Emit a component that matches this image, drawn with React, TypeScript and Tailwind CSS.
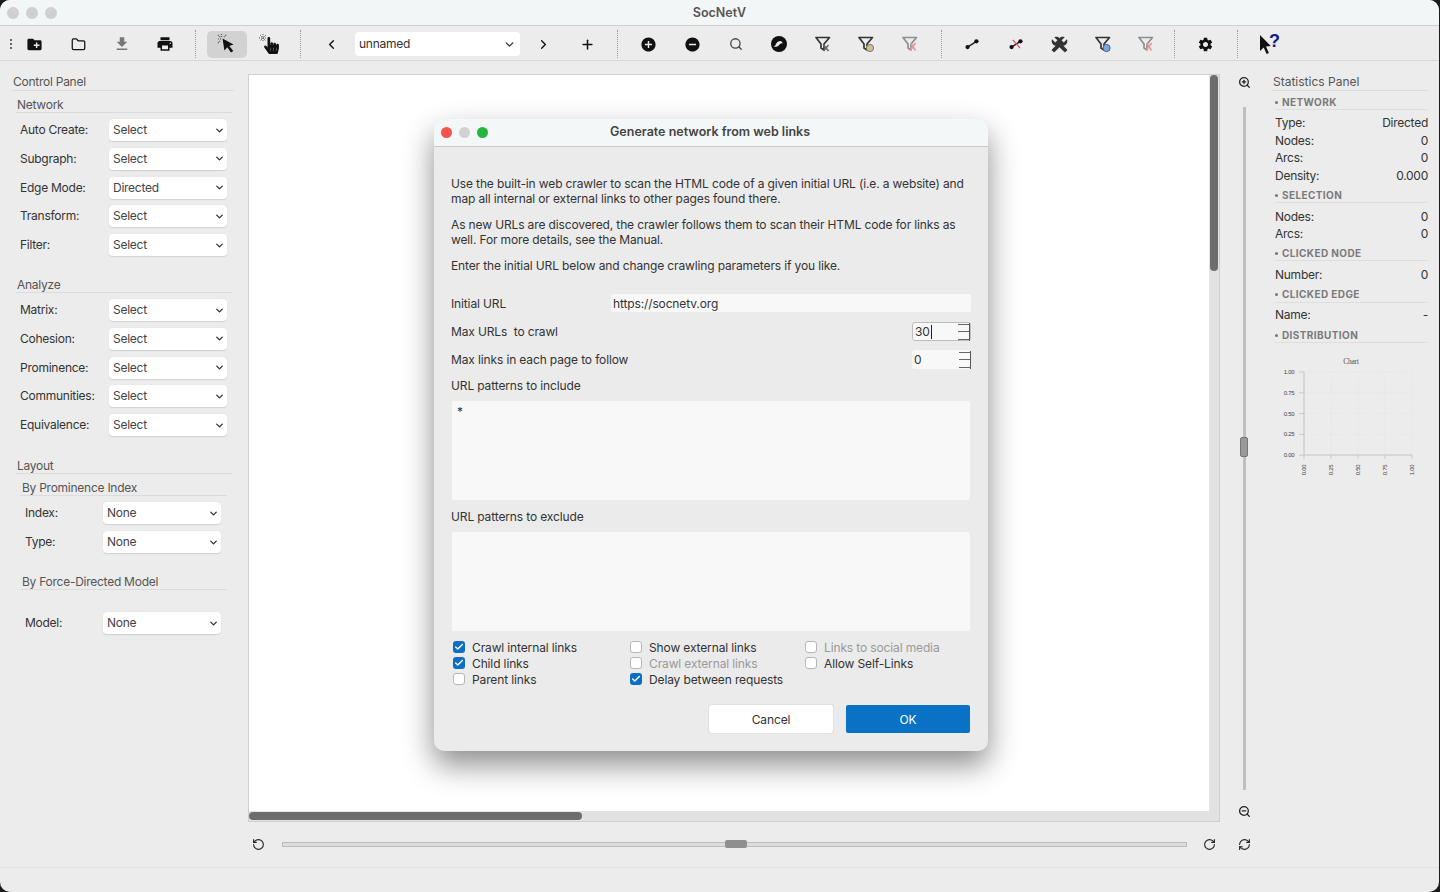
import React from 'react';
import { ChevronDown, ChevronLeft, ChevronRight, Plus, Check, ZoomIn, ZoomOut, RotateCcw, RotateCw, RefreshCw, Folder, Search } from 'lucide-react';
import { MdCreateNewFolder, MdFileDownload, MdPrint, MdAddCircle, MdRemoveCircle, MdSettings, MdBuild } from 'react-icons/md';
import { FaHandPointer } from 'react-icons/fa';

const FONT = "font-['Inter','Liberation_Sans',sans-serif]";

function Sep() {
  return <div className="h-[28px] w-px border-l border-dotted border-[#9a9a9a]" />;
}

function Tool({ children, className = '' }: { children?: React.ReactNode; className?: string }) {
  return <div className={`flex h-[28px] w-[43.5px] shrink-0 items-center justify-center text-[#111] ${className}`}>{children}</div>;
}

function Funnel({ badge, faded }: { badge: string; faded?: boolean }) {
  return (
    <svg width="20" height="20" viewBox="0 0 20 20" className={faded ? 'opacity-50' : ''}>
      <path d="M3 3.500h13.500L11 10v6l-3-2v-4z" fill="none" stroke="#333" strokeWidth="1.7" strokeLinejoin="round" />
      {badge === 'x' && <path d="M10.500 11l5 6M15.500 11l-5 6" stroke="#666" strokeWidth="1.5" />}
      {badge === 'gold' && <circle cx="14" cy="14" r="3.600" fill="#c9c48a" stroke="#777" />}
      {badge === 'red' && <path d="M10.500 16l5-7M11 9.500l4.500 7" stroke="#e0485a" strokeWidth="1.7" />}
      {badge === 'blue' && <circle cx="13.500" cy="14" r="3.600" fill="#7fa6d8" stroke="#3d5f8f" />}
    </svg>
  );
}

function Edge({ red }: { red?: boolean }) {
  return (
    <svg width="16" height="16" viewBox="0 0 18 18">
      <path d="M4 12.500L14 6" stroke="#222" strokeWidth="1.600" />
      <circle cx="4" cy="12.500" r="2.400" fill="#111" />
      <circle cx="14" cy="6" r="2.400" fill="#111" />
      {red && <path d="M5.500 4.500l8 9" stroke="#e8506a" strokeWidth="1.300" />}
    </svg>
  );
}

function ArrowSpark() {
  return (
    <svg width="22" height="22" viewBox="0 0 22 22">
      <path d="M6.500 5.500l11 6-4.200 1.400 4 5-2.300 1.600-3.700-5.200-2.900 3.100z" fill="#111" />
      <g stroke="#555" strokeWidth="1.200" strokeDasharray="1 1">
        <path d="M2 6h3.500M5.500 1V4.500M2 2l3 3M10 2L7.500 4.500M2 10l2.500-2.500" />
      </g>
    </svg>
  );
}

function HandSpark() {
  return (
    <span className="relative flex h-[22px] w-[22px] items-center justify-center">
      <FaHandPointer size={17} className="ml-[5px] mt-[2px] text-[#111]" />
      <svg width="8" height="8" viewBox="0 0 8 8" className="absolute left-[1px] top-[1px]">
        <path d="M0 4h8M4 0v8M1 1l6 6M7 1L1 7" stroke="#555" strokeWidth="1" strokeDasharray="1 1" />
      </svg>
    </span>
  );
}

function WhatsThis() {
  return (
    <svg width="28" height="24" viewBox="0 0 28 24">
      <path d="M6 3v16l3.700-3.400 2.900 6.400 2.300-1.100-2.900-6.300 4.800-.5z" fill="#111" />
      <text x="15" y="15" fontSize="18" fontWeight="700" fill="#0f1f8a" fontFamily="Liberation Sans, sans-serif">?</text>
    </svg>
  );
}

function Toolbar() {
  return (
    <div className="flex h-[35px] shrink-0 items-center border-b border-[#d6d6d6] bg-[#ececec] pt-[2px]">
      <div className="ml-[10px] h-[10px] w-[3px] border-l-2 border-dotted border-[#666]" />
      <Tool><MdCreateNewFolder size={17} /></Tool>
      <Tool><Folder size={15} strokeWidth={2} /></Tool>
      <Tool><MdFileDownload size={18} className="text-[#777]" /></Tool>
      <Tool><MdPrint size={18} /></Tool>
      <div className="ml-[8px] mr-[11px]"><Sep /></div>
      <div className="flex h-[27px] w-[40px] shrink-0 items-center justify-center rounded-[5px] bg-[#d2d2d2]"><ArrowSpark /></div>
      <Tool><HandSpark /></Tool>
      <div className="ml-[9px] mr-[9px]"><Sep /></div>
      <Tool><ChevronLeft size={15} strokeWidth={2.2} /></Tool>
      <div className="ml-[2px] flex h-[24px] w-[165px] shrink-0 items-center justify-between rounded-[4px] bg-white pl-[4px] pr-[4px] text-[12px] text-[#333]">
        <span>unnamed</span>
        <ChevronDown size={13} strokeWidth={2.6} className="text-[#333]" />
      </div>
      <Tool className="ml-[2px]"><ChevronRight size={15} strokeWidth={2.2} /></Tool>
      <Tool><Plus size={15} strokeWidth={2.4} /></Tool>
      <div className="ml-[8px] mr-[9px]"><Sep /></div>
      <Tool><MdAddCircle size={17} /></Tool>
      <Tool><MdRemoveCircle size={17} /></Tool>
      <Tool><Search size={14} strokeWidth={2.2} className="text-[#444]" /></Tool>
      <Tool>
        <svg width="20" height="20" viewBox="0 0 20 20">
          <circle cx="10" cy="10" r="8" fill="#111" />
          <path d="M4.500 12.500c2.500 0 2-5 6.500-5.500 1.500 0 2.600 1 2.600 2.400-1.800-.6-2.600.8-4.200 2.300-1.300 1.200-3.200 1.300-4.900.8z" fill="#ececec" />
        </svg>
      </Tool>
      <Tool><Funnel badge="x" /></Tool>
      <Tool><Funnel badge="gold" /></Tool>
      <Tool><Funnel badge="red" faded /></Tool>
      <div className="ml-[9px] mr-[9px]"><Sep /></div>
      <Tool><Edge /></Tool>
      <Tool><Edge red /></Tool>
      <Tool>
        <span className="relative flex items-center justify-center">
          <MdBuild size={17} className="text-[#333]" />
          <MdBuild size={17} className="absolute -scale-x-100 text-[#333]" />
        </span>
      </Tool>
      <Tool><Funnel badge="blue" /></Tool>
      <Tool><Funnel badge="red" faded /></Tool>
      <div className="ml-[6px] mr-[9px]"><Sep /></div>
      <Tool><MdSettings size={17} /></Tool>
      <div className="ml-[9px] mr-[9px]"><Sep /></div>
      <Tool><WhatsThis /></Tool>
    </div>
  );
}

function Select({ label, value = 'Select', labelW = 'w-[89px]' }: { label: string; value?: string; labelW?: string }) {
  return (
    <div className="flex h-[22px] items-center">
      <div className={`${labelW} shrink-0 text-[12px] text-[#333]`}>{label}</div>
      <div className="flex h-[22px] w-[118px] items-center justify-between rounded-[4px] bg-white pl-[4px] pr-[2px] text-[12px] text-[#444] shadow-[0_0.5px_1px_rgba(0,0,0,0.12)]">
        <span>{value}</span>
        <ChevronDown size={11} strokeWidth={3} className="text-[#333]" />
      </div>
    </div>
  );
}

function GroupTitle({ children, className = '' }: { children: React.ReactNode; className?: string }) {
  return <div className={`flex h-[15px] items-center border-b border-[#dcdcdc] text-[12px] leading-none text-[#555] ${className}`}>{children}</div>;
}

function LeftPanel() {
  return (
    <div className="w-[248px] shrink-0 pt-[13px]">
      <GroupTitle className="ml-[12px] mr-[14px] h-[17px] pl-px">Control Panel</GroupTitle>
      <GroupTitle className="ml-[16px] mr-[16px] mt-[7px] pl-px">Network</GroupTitle>
      <div className="ml-[20px] mt-[6px] flex flex-col gap-[6.75px]">
        <Select label="Auto Create:" />
        <Select label="Subgraph:" />
        <Select label="Edge Mode:" value="Directed" />
        <Select label="Transform:" />
        <Select label="Filter:" />
      </div>
      <GroupTitle className="ml-[16px] mr-[16px] mt-[22px] pl-px">Analyze</GroupTitle>
      <div className="ml-[20px] mt-[6px] flex flex-col gap-[6.75px]">
        <Select label="Matrix:" />
        <Select label="Cohesion:" />
        <Select label="Prominence:" />
        <Select label="Communities:" />
        <Select label="Equivalence:" />
      </div>
      <GroupTitle className="ml-[16px] mr-[16px] mt-[23px] pl-px">Layout</GroupTitle>
      <GroupTitle className="ml-[20px] mr-[21px] mt-[7px] pl-[2px]">By Prominence Index</GroupTitle>
      <div className="ml-[25px] mt-[6px] flex flex-col gap-[7px]">
        <Select label="Index:" value="None" labelW="w-[78px]" />
        <Select label="Type:" value="None" labelW="w-[78px]" />
      </div>
      <GroupTitle className="ml-[20px] mr-[21px] mt-[22px] pl-[2px]">By Force-Directed Model</GroupTitle>
      <div className="ml-[25px] mt-[22px]">
        <Select label="Model:" value="None" labelW="w-[78px]" />
      </div>
    </div>
  );
}

function StatTitle({ children, className = '' }: { children: React.ReactNode; className?: string }) {
  return (
    <div className={`ml-[3px] mr-[4px] flex h-[15px] items-center gap-[4px] border-b border-[#dedede] text-[10px] font-bold tracking-[0.04em] text-[#7a7a7a] ${className}`}>
      <span className="h-[3px] w-[3px] rounded-full bg-[#777]" />
      {children}
    </div>
  );
}

function StatRow({ label, value, className = '' }: { label: string; value: string; className?: string }) {
  return (
    <div className={`ml-[3px] mr-[3px] flex h-[17.5px] items-center justify-between text-[12px] text-[#333] ${className}`}>
      <span>{label}</span>
      <span>{value}</span>
    </div>
  );
}

function Chart() {
  const ticks = ['1.00', '0.75', '0.50', '0.25', '0.00'];
  return (
    <svg width="156" height="124" viewBox="0 0 156 124" className="ml-[1px] mt-[9px]">
      <text x="78" y="12" fontSize="7.5" fill="#555" textAnchor="middle" fontFamily="Liberation Serif, serif">Chart</text>
      {ticks.map((t, i) => {
        const y = 20 + i * 20.8;
        const x = 31 + i * 27;
        return (
          <g key={t}>
            <line x1="31" x2="139" y1={y} y2={y} stroke="#e4e4e4" strokeWidth="0.7" strokeDasharray="1.5 1.5" />
            <line x1={x} x2={x} y1="20" y2="103" stroke="#e4e4e4" strokeWidth="0.7" strokeDasharray="1.5 1.5" />
            <line x1="26" x2="31" y1={y} y2={y} stroke="#bbb" strokeWidth="0.7" />
            <line x1={x} x2={x} y1="103" y2="107" stroke="#bbb" strokeWidth="0.7" />
            <text x="16" y={y + 2} fontSize="6" fill="#444" fontFamily="Liberation Sans, sans-serif" textAnchor="middle">{t}</text>
            <text transform={`translate(${x + 2} 118) rotate(-90)`} fontSize="6" fill="#444" fontFamily="Liberation Sans, sans-serif" textAnchor="middle">{ticks[4 - i]}</text>
          </g>
        );
      })}
      <path d="M31 20V103H139" fill="none" stroke="#c4c4c4" strokeWidth="1" />
    </svg>
  );
}

function StatsPanel() {
  return (
    <div className="w-[167px] shrink-0 pt-[13px]">
      <GroupTitle className="mr-[11px] h-[17px] pl-px tracking-normal">Statistics Panel</GroupTitle>
      <div className="mr-[8px]">
        <StatTitle className="mt-[4px]">NETWORK</StatTitle>
        <div className="mt-[4.5px]">
          <StatRow label="Type:" value="Directed" />
          <StatRow label="Nodes:" value="0" />
          <StatRow label="Arcs:" value="0" />
          <StatRow label="Density:" value="0.000" />
        </div>
        <StatTitle className="mt-[3.5px]">SELECTION</StatTitle>
        <div className="mt-[5px]">
          <StatRow label="Nodes:" value="0" />
          <StatRow label="Arcs:" value="0" />
        </div>
        <StatTitle className="mt-[3px]">CLICKED NODE</StatTitle>
        <StatRow label="Number:" value="0" className="mt-[5px]" />
        <StatTitle className="mt-[4px]">CLICKED EDGE</StatTitle>
        <StatRow label="Name:" value="-" className="mt-[4px]" />
        <StatTitle className="mt-[4px]">DISTRIBUTION</StatTitle>
        <Chart />
      </div>
    </div>
  );
}

function Box({ label, checked, dim }: { label: string; checked?: boolean; dim?: boolean }) {
  return (
    <div className="flex h-[16px] items-center gap-[7px]">
      {checked ? (
        <span className="flex h-[12px] w-[12px] items-center justify-center rounded-[3px] bg-[#0a6fc2]">
          <Check size={10} strokeWidth={3.5} className="text-white" />
        </span>
      ) : (
        <span className="h-[12px] w-[12px] rounded-[3px] border border-[#b5b5b5] bg-white" />
      )}
      <span className={`text-[12px] ${dim ? 'text-[#9a9a9a]' : 'text-[#333]'}`}>{label}</span>
    </div>
  );
}

function Spin({ value, caret }: { value: string; caret?: boolean }) {
  return (
    <div className={`flex h-[19px] w-[59px] items-center justify-between rounded-[3px] bg-[#f8f8f8] pl-[2px] text-[12px] text-[#333] ${caret ? 'border border-[#bdbdbd]' : ''}`}>
      <span className={caret ? 'border-r border-[#222] pr-px leading-[14px]' : ''}>{value}</span>
      <span className="flex h-[18px] w-[12px] flex-col justify-between border-r border-[#555] py-px">
        <span className="h-px w-full bg-[#666]" />
        <span className="h-px w-full bg-[#666]" />
        <span className="h-px w-full bg-[#666]" />
      </span>
    </div>
  );
}

function Dialog() {
  return (
    <div className="absolute left-[434px] top-[58px] h-[632px] w-[554px] overflow-hidden rounded-[10px] bg-[#ebebeb] shadow-[0_14px_30px_rgba(0,0,0,0.45)]">
      <div className="flex h-[28px] items-center border-b border-[#c9c9c9] bg-[#f4f7f7] pl-[7px]">
        <span className="h-[11px] w-[11px] rounded-full bg-[#f4544c]" />
        <span className="ml-[7px] h-[11px] w-[11px] rounded-full bg-[#d2d2d2]" />
        <span className="ml-[7px] h-[11px] w-[11px] rounded-full bg-[#27b53f]" />
        <span className="ml-[122px] text-[12.5px] font-semibold tracking-normal text-[#444]">Generate network from web links</span>
      </div>
      <div className="px-[17px] pt-[29px] text-[12px] leading-[15px] tracking-[-0.011em] text-[#333]">
        <p className="whitespace-nowrap">Use the built-in web crawler to scan the HTML code of a given initial URL (i.e. a website) and<br />map all internal or external links to other pages found there.</p>
        <p className="mt-[11px] whitespace-nowrap">As new URLs are discovered, the crawler follows them to scan their HTML code for links as<br />well. For more details, see the Manual.</p>
        <p className="mt-[11px]">Enter the initial URL below and change crawling parameters if you like.</p>
        <div className="mt-[21px] flex h-[18px] items-center justify-between">
          <span>Initial URL</span>
          <div className="flex h-[18px] w-[360px] items-center rounded-[2px] bg-[#f8f8f8] pl-[2px]">https://socnetv.org</div>
        </div>
        <div className="mt-[10px] flex h-[19px] items-center justify-between">
          <span>Max URLs&nbsp; to crawl</span>
          <Spin value="30" caret />
        </div>
        <div className="mt-[9px] flex h-[19px] items-center justify-between">
          <span>Max links in each page to follow</span>
          <Spin value="0" />
        </div>
        <div className="mt-[9px] h-[15px]">URL patterns to include</div>
        <div className="ml-px mr-[1px] mt-[8px] h-[99px] rounded-[2px] bg-[#f8f8f8] pl-[5px] pt-[3px]">*</div>
        <div className="mt-[9px] h-[15px]">URL patterns to exclude</div>
        <div className="ml-px mr-[1px] mt-[8px] h-[99px] rounded-[2px] bg-[#f8f8f8]" />
        <div className="ml-[2px] mt-[8px] grid grid-cols-[177px_175px_1fr]">
          <div>
            <Box label="Crawl internal links" checked />
            <Box label="Child links" checked />
            <Box label="Parent links" />
          </div>
          <div>
            <Box label="Show external links" />
            <Box label="Crawl external links" dim />
            <Box label="Delay between requests" checked />
          </div>
          <div>
            <Box label="Links to social media" dim />
            <Box label="Allow Self-Links" />
          </div>
        </div>
        <div className="mr-[1px] mt-[18px] flex justify-end gap-[13px]">
          <div className="flex h-[28px] w-[124px] items-center justify-center rounded-[2px] bg-white text-[#333] shadow-[0_0_1px_rgba(0,0,0,0.4)]">Cancel</div>
          <div className="flex h-[28px] w-[124px] items-center justify-center rounded-[2px] bg-[#0a72c4] text-white">OK</div>
        </div>
      </div>
    </div>
  );
}

function Center() {
  return (
    <div className="relative flex w-[974px] shrink-0 flex-col pt-[13px]">
      <div className="mr-[2px] flex h-[748px] border border-[#cfcfcf] bg-[#e4e4e4]">
        <div className="flex min-w-0 flex-1 flex-col">
          <div className="flex-1 bg-white" />
          <div className="flex h-[10px] items-center bg-[#e2e2e2]">
            <div className="h-[8px] w-[333px] rounded-full bg-[#6d6d6d]" />
          </div>
        </div>
        <div className="w-[10px] bg-[#e2e2e2] pl-[1px]">
          <div className="h-[196px] w-[8px] rounded-full bg-[#6d6d6d]" />
        </div>
      </div>
      <div className="mt-[10px] flex h-[24px] items-center pl-[4px]">
        <RotateCcw size={13} className="text-[#222]" />
        <div className="relative ml-[17px] flex h-[5px] w-[905px] items-center border border-[#bcbcbc] bg-[#dcdcdc]">
          <div className="absolute left-[442px] h-[8px] w-[22px] rounded-[2px] bg-[#8f8f8f]" />
        </div>
        <RotateCw size={13} className="ml-[16px] text-[#222]" />
      </div>
    </div>
  );
}

function ZoomColumn() {
  return (
    <div className="flex w-[50px] shrink-0 flex-col items-center pr-[6px] pt-[12px]">
      <div className="flex h-[18px] w-[22px] items-center justify-center"><ZoomIn size={13} strokeWidth={2.4} className="text-[#222]" /></div>
      <div className="relative mt-[16px] flex h-[683px] w-[3px] justify-center bg-[#bfbfbf]">
        <div className="absolute top-[330px] h-[20px] w-[8px] rounded-[2px] border border-[#777] bg-[#9a9a9a]" />
      </div>
      <div className="mt-[12px] flex h-[18px] w-[22px] items-center justify-center"><ZoomOut size={13} strokeWidth={2.4} className="text-[#222]" /></div>
      <div className="mt-[15px] flex h-[18px] items-center"><RefreshCw size={13} className="text-[#222]" /></div>
    </div>
  );
}

export default function App() {
  return (
    <div className={`h-[892px] w-[1440px] overflow-hidden bg-[#1c1c1c] tracking-[-0.016em] ${FONT}`}>
      <div className="flex h-[892px] w-[1439px] flex-col overflow-hidden rounded-[10px] bg-[#ececec]">
        <div className="relative flex h-[26px] shrink-0 items-center justify-center border-b border-[#cfcfcf] bg-[#f3f6f6] pt-px">
          <div className="absolute left-[7px] flex gap-[7px]">
            <span className="h-[12px] w-[12px] rounded-full bg-[#cfcfcf]" />
            <span className="h-[12px] w-[12px] rounded-full bg-[#cfcfcf]" />
            <span className="h-[12px] w-[12px] rounded-full bg-[#cfcfcf]" />
          </div>
          <span className="text-[12.5px] font-semibold tracking-normal text-[#555]">SocNetV</span>
        </div>
        <Toolbar />
        <div className="relative flex h-[807px] shrink-0 border-b border-[#e0e0e0]">
          <LeftPanel />
          <Center />
          <ZoomColumn />
          <StatsPanel />
          <Dialog />
        </div>
        <div className="flex-1" />
      </div>
    </div>
  );
}
